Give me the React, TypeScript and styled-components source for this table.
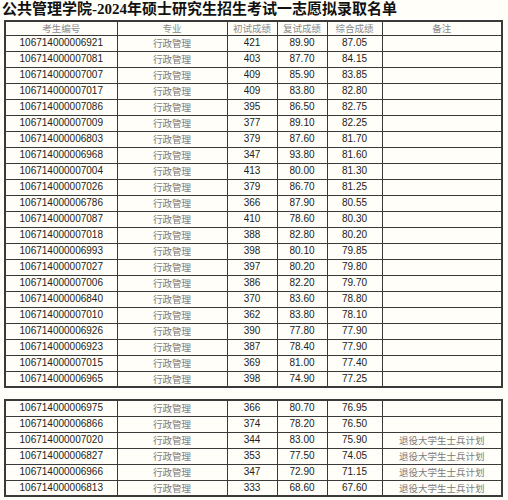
import styled, { createGlobalStyle } from 'styled-components'

const Global = createGlobalStyle`
    html, body {
        margin: 0;
        padding: 0;
        background: #fffef8;
    }
`

type Row = [string, string, string, string, string?]

const Lista1: Row[] = [
    ['106714000006921', '421', '89.90', '87.05'],
    ['106714000007081', '403', '87.70', '84.15'],
    ['106714000007007', '409', '85.90', '83.85'],
    ['106714000007017', '409', '83.80', '82.80'],
    ['106714000007086', '395', '86.50', '82.75'],
    ['106714000007009', '377', '89.10', '82.25'],
    ['106714000006803', '379', '87.60', '81.70'],
    ['106714000006968', '347', '93.80', '81.60'],
    ['106714000007004', '413', '80.00', '81.30'],
    ['106714000007026', '379', '86.70', '81.25'],
    ['106714000006786', '366', '87.90', '80.55'],
    ['106714000007087', '410', '78.60', '80.30'],
    ['106714000007018', '388', '82.80', '80.20'],
    ['106714000006993', '398', '80.10', '79.85'],
    ['106714000007027', '397', '80.20', '79.80'],
    ['106714000007006', '386', '82.20', '79.70'],
    ['106714000006840', '370', '83.60', '78.80'],
    ['106714000007010', '362', '83.80', '78.10'],
    ['106714000006926', '390', '77.80', '77.90'],
    ['106714000006923', '387', '78.40', '77.90'],
    ['106714000007015', '369', '81.00', '77.40'],
    ['106714000006965', '398', '74.90', '77.25'],
]

const Lista2: Row[] = [
    ['106714000006975', '366', '80.70', '76.95'],
    ['106714000006866', '374', '78.20', '76.50'],
    ['106714000007020', '344', '83.00', '75.90', '退役大学生士兵计划'],
    ['106714000006827', '353', '77.50', '74.05', '退役大学生士兵计划'],
    ['106714000006966', '347', '72.90', '71.15', '退役大学生士兵计划'],
    ['106714000006813', '333', '68.60', '67.60', '退役大学生士兵计划'],
]

const Cabecalhos = ['考生编号', '专业', '初试成绩', '复试成绩', '综合成绩', '备注']
const Larguras = [112, 110, 50, 50, 55, 120]

const Linhas = ({ dados }: { dados: Row[] }) => (
    <tbody>
        {dados.map((r, i) => (
            <Linha key={i}>
                <Num>{r[0]}</Num>
                <Texto>行政管理</Texto>
                <Num>{r[1]}</Num>
                <Num>{r[2]}</Num>
                <Num>{r[3]}</Num>
                <Texto>{r[4] ?? ''}</Texto>
            </Linha>
        ))}
    </tbody>
)

const Colunas = () => (
    <colgroup>
        {Larguras.map((w, i) => (
            <col key={i} style={{ width: w }} />
        ))}
    </colgroup>
)

const App = () => {
    return (
        <Pagina>
            <Global />
            <Titulo>公共管理学院-2024年硕士研究生招生考试一志愿拟录取名单</Titulo>
            <Tabela>
                <Colunas />
                <thead>
                    <Cabeca>
                        {Cabecalhos.map((c) => (
                            <Th key={c}>{c}</Th>
                        ))}
                    </Cabeca>
                </thead>
                <Linhas dados={Lista1} />
            </Tabela>
            <Tabela>
                <Colunas />
                <Linhas dados={Lista2} />
            </Tabela>
        </Pagina>
    )
}

export default App

const Pagina = styled.div`
    display: flex;
    flex-direction: column;
    gap: 11px;
    padding: 0 0 0 4px;
    width: 497px;
`

const Titulo = styled.h1`
    margin: 0 0 -10px -2px;
    height: 19px;
    line-height: 19px;
    font-size: 15px;
    font-weight: 700;
    color: #111;
    white-space: nowrap;
    font-family: "Liberation Serif", "Noto Sans CJK SC", serif;
`

const Tabela = styled.table`
    border-collapse: collapse;
    table-layout: fixed;
    width: 497px;
    border: 2px solid #3a3a3a;
`

const Cabeca = styled.tr`
    height: 14px;
`

const Linha = styled.tr`
    height: 16px;
`

const Th = styled.th`
    border: 1.5px solid #3a3a3a;
    padding: 0;
    font-weight: 400;
    font-size: 9.5px;
    line-height: 12px;
    color: #8a8a8a;
    font-family: "Noto Sans CJK SC", sans-serif;
    text-align: center;
`

const Num = styled.td`
    border: 1.5px solid #3a3a3a;
    padding: 0;
    font-size: 10px;
    line-height: 14px;
    color: #222;
    font-family: "Liberation Sans", Arial, sans-serif;
    text-align: center;
`

const Texto = styled.td`
    border: 1.5px solid #3a3a3a;
    padding: 0;
    font-size: 9.5px;
    line-height: 14px;
    color: #7a7a7a;
    font-family: "Noto Sans CJK SC", sans-serif;
    text-align: center;
`
